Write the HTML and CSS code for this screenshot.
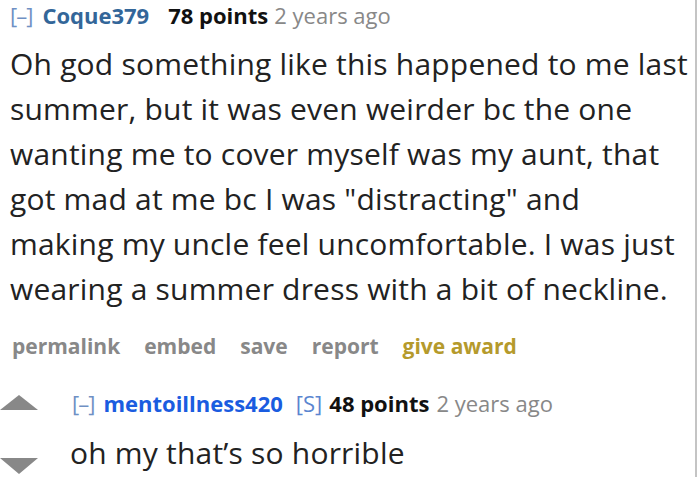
FILE: index.html
```html
<!DOCTYPE html>
<html>
<head>
<meta charset="utf-8">
<link rel="stylesheet" href="styles.css">
</head>
<body>
<div class="page">
  <div class="comment">
    <div class="tagline">
      <span class="toggle">[–]</span>
      <span class="author">Coque379</span>
      <span class="score">78 points</span>
      <span class="time">2 years ago</span>
    </div>
    <div class="body">Oh god something like this happened to me last<br>summer, but it was even weirder bc the one<br>wanting me to cover myself was my aunt, that<br>got mad at me bc I was "distracting" and<br>making my uncle feel uncomfortable. I was just<br>wearing a summer dress with a bit of neckline.</div>
    <ul class="buttons">
      <li>permalink</li>
      <li>embed</li>
      <li>save</li>
      <li>report</li>
      <li class="award">give award</li>
    </ul>
    <div class="child">
      <div class="votes">
        <span class="arrow up"></span>
        <span class="arrow down"></span>
      </div>
      <div class="entry">
        <div class="tagline small">
          <span class="toggle">[–]</span>
          <span class="author op">mentoillness420</span>
          <span class="flag">[S]</span>
          <span class="score">48 points</span>
          <span class="time">2 years ago</span>
        </div>
        <div class="body reply">oh my that’s so horrible</div>
      </div>
    </div>
  </div>
</div>
</body>
</html>
```
FILE: styles.css
```css
html, body {
  margin: 0;
  padding: 0;
  background: #fff;
}
body {
  font-family: "Open Sans", "Noto Sans", sans-serif;
  color: #222;
  overflow: hidden;
  width: 700px;
  height: 477px;
}
.page {
  width: 695px;
  height: 477px;
  border-right: 2px solid #c4c4c4;
  overflow: hidden;
}
.comment {
  padding-left: 10px;
}
.tagline {
  font-size: 22px;
  line-height: 30px;
  display: flex;
  align-items: baseline;
  white-space: nowrap;
}
.toggle {
  color: #6f90c4;
  font-weight: 400;
  margin-right: 10px;
  letter-spacing: -1px;
}
.author {
  color: #336699;
  font-weight: 700;
  margin-right: 19px;
}
.score {
  color: #111;
  font-weight: 700;
  margin-right: 6px;
}
.time {
  color: #888;
}
.body {
  font-size: 30px;
  line-height: 45px;
  letter-spacing: 0.2px;
  margin-top: 11px;
  white-space: nowrap;
}
.buttons {
  list-style: none;
  margin: 20px 0 0 2px;
  padding: 0;
  display: flex;
  gap: 24px;
  font-size: 21px;
  font-weight: 700;
  color: #888;
  line-height: 30px;
}
.buttons .award {
  color: #b59a2c;
}
.child {
  display: flex;
  margin-top: 27px;
  margin-left: -10px;
}
.votes {
  width: 62px;
  display: flex;
  flex-direction: column;
  gap: 48px;
  padding-top: 7px;
}
.arrow {
  display: block;
  width: 0;
  height: 0;
  border-left: 19px solid transparent;
  border-right: 19px solid transparent;
}
.arrow.up {
  border-bottom: 15px solid #888;
}
.arrow.down {
  border-top: 16px solid #888;
}
.entry {
  padding-left: 10px;
}
.small .toggle {
  margin-right: 9px;
}
.small .author.op {
  color: #1a5ce0;
  margin-right: 13px;
}
.flag {
  color: #5a85d0;
  margin-right: 7px;
}
.small .score {
  margin-right: 7px;
}
.body.reply {
  margin-top: 12px;
  margin-left: -2px;
}
```
